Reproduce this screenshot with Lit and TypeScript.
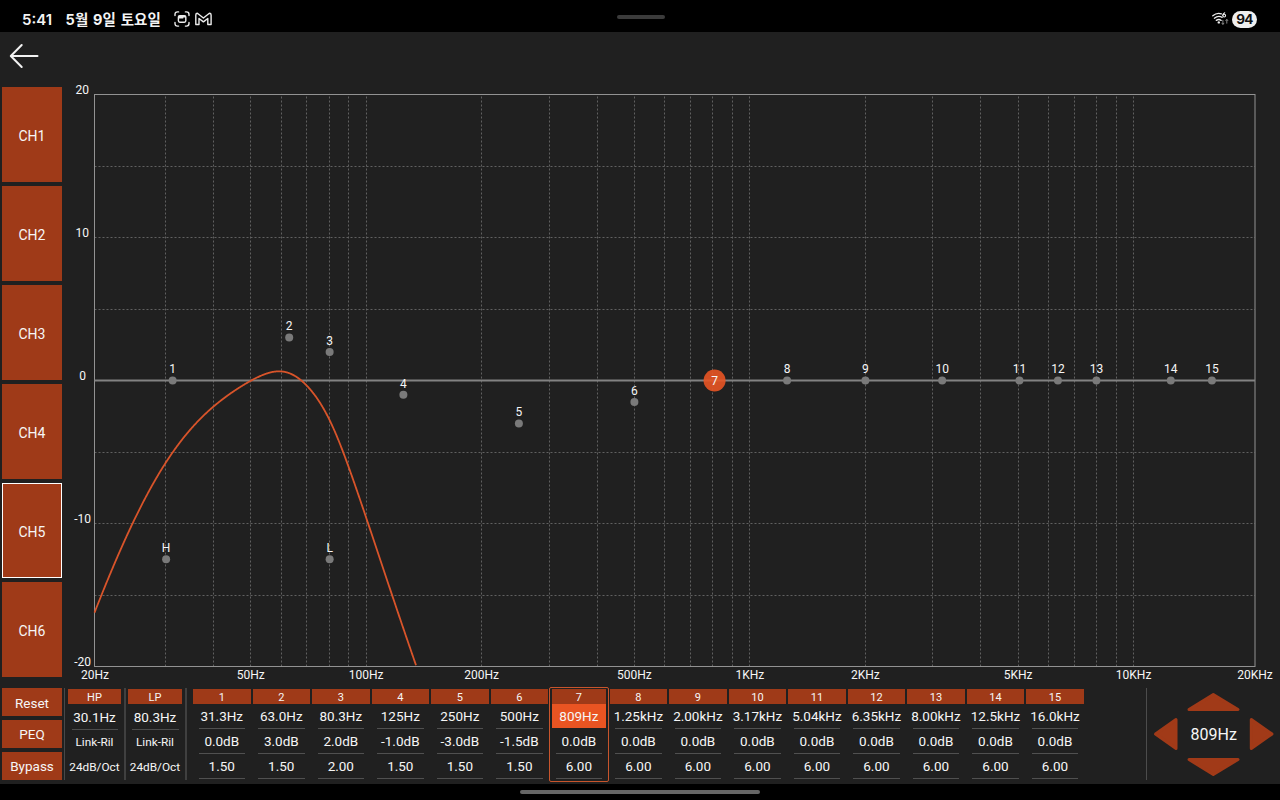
import { LitElement, html, svg, css } from "lit";
import { customElement, state } from "lit/decorators.js";
import { classMap } from "lit/directives/class-map.js";

interface Band {
  name: string;
  freq: number;
  label: string;
  gain: number;
  q: number;
}

const band = (name: string, freq: number, label: string, gain: number, q: number): Band => ({ name, freq, label, gain, q });

const BANDS: Band[] = [
  band("1", 31.3, "31.3Hz", 0, 1.5),
  band("2", 63, "63.0Hz", 3, 1.5),
  band("3", 80.3, "80.3Hz", 2, 2),
  band("4", 125, "125Hz", -1, 1.5),
  band("5", 250, "250Hz", -3, 1.5),
  band("6", 500, "500Hz", -1.5, 1.5),
  band("7", 809, "809Hz", 0, 6),
  band("8", 1250, "1.25kHz", 0, 6),
  band("9", 2000, "2.00kHz", 0, 6),
  band("10", 3170, "3.17kHz", 0, 6),
  band("11", 5040, "5.04kHz", 0, 6),
  band("12", 6350, "6.35kHz", 0, 6),
  band("13", 8000, "8.00kHz", 0, 6),
  band("14", 12500, "12.5kHz", 0, 6),
  band("15", 16000, "16.0kHz", 0, 6),
];

const HIGH_PASS = 30.1;
const LOW_PASS = 80.3;

// Chart geometry, in the pixel units of the chart's own viewBox.
const LEFT = 30.5;
const RIGHT = 1191;
const TOP = 12.5;
const BOTTOM = 584.5;
const ZERO = 298.5;
const PX_PER_DB = 14.3;
const DECADE = 383.7;

const xOf = (freq: number) => 302.2 + DECADE * Math.log10(freq / 100);
const freqAt = (x: number) => 100 * Math.pow(10, (x - 302.2) / DECADE);
const yOf = (db: number) => ZERO - db * PX_PER_DB;

function bellDb(freq: number, b: Band): number {
  const w = freq / b.freq;
  const a = Math.pow(10, b.gain / 40);
  const re = 1 - w * w;
  return 10 * Math.log10((re * re + ((w * a) / b.q) ** 2) / (re * re + (w / (a * b.q)) ** 2));
}

function responseDb(freq: number): number {
  const hp = (freq / HIGH_PASS) ** 4;
  const lp = (freq / LOW_PASS) ** 4;
  const slopes = 20 * Math.log10(hp / (1 + hp)) - 20 * Math.log10(1 + lp);
  return BANDS.reduce((sum, b) => (b.gain ? sum + bellDb(freq, b) : sum), slopes);
}

@customElement("eq-status-bar")
export class EqStatusBar extends LitElement {
  static styles = css`
    :host {
      display: flex;
      height: 32px;
      background: #000;
      color: #f4f4f4;
      align-items: center;
      box-sizing: border-box;
      padding: 6px 23px 0 22px;
      font: 600 15px/20px Inter, "Noto Sans CJK KR", sans-serif;
    }
    .time { width: 33px; flex: none; padding-top: 1px; white-space: nowrap; }
    .date { margin-left: 10.5px; width: 97px; flex: none; padding-top: 1px; font: 700 14.5px/20px Inter, "Noto Sans CJK KR", sans-serif; letter-spacing: 0.15px; word-spacing: 1px; white-space: nowrap; }
    .notes { margin-left: 11.5px; flex: none; }
    .handle { margin: -4px 0 0 404.5px; width: 48px; height: 4px; border-radius: 2px; background: #3b3b3b; flex: none; }
    .wifi { margin-left: auto; }
    .battery {
      margin-left: 3.5px;
      width: 25px;
      height: 17px;
      border-radius: 9px;
      background: #efefef;
      color: #111;
      text-align: center;
      font: 700 13.5px/17px Inter, sans-serif;
      letter-spacing: -0.8px;
    }
  `;
  render() {
    return html`
      <span class="time">5:41</span>
      <span class="date">5월 9일 토요일</span>
      <svg class="notes" width="38" height="16" viewBox="0 0 38 16" fill="none" stroke="#ececec" stroke-width="1.4" stroke-linecap="round" stroke-linejoin="round">
        <path d="M1 4.6V3.4Q1 .9 3.5.9H4.6M11.4.9H12.5Q15 .9 15 3.4V4.6M15 11.4V12.6Q15 15.1 12.5 15.1H11.4M4.6 15.1H3.5Q1 15.1 1 12.6V11.4" />
        <rect x="4.4" y="4.6" width="7.4" height="6.6" rx="1.4" />
        <path d="M5 5.6H11.2M5 6.7H8.5" stroke-width="1.8" />
        <path d="M21.8 13.5V4Q21.8 2.3 23.4 2.3L29.4 7 35.4 2.3Q37.1 2.3 37.1 4V13.5H33.8V7.5L29.4 10.9 25 7.5V13.5Z" stroke-width="1.4" />
      </svg>
      <div class="handle"></div>
      <svg class="wifi" width="17" height="14" viewBox="0 0 17 14" fill="none" stroke-linecap="round">
        <path d="M.8 3.8Q4.8.4 9.4 1.9M2.4 6.2Q6 3.2 10.2 5.3M4.3 8.4Q6.8 6.6 9.2 8.4" stroke="#eee" stroke-width="1.3" />
        <circle cx="6.8" cy="10.4" r="1.2" fill="#eee" />
        <circle cx="12.2" cy="3.6" r="1.4" stroke="#eee" stroke-width="1.1" />
        <path d="M12.7.8Q11 1.7 10.8 3.4" stroke="#eee" stroke-width="1.1" />
        <path d="M10.9 8.4V12.2M9.9 11.2L10.9 12.4 11.9 11.2M14.8 11.2V7.6M13.8 8.6L14.8 7.4 15.8 8.6" stroke="#858585" stroke-width="1" />
      </svg>
      <div class="battery">94</div>
    `;
  }
}

@customElement("eq-chart")
export class EqChart extends LitElement {
  static styles = css`
    :host { display: block; width: 1216px; height: 602px; }
    .plot { display: block; font: 12px Roboto, sans-serif; }
    .grid { stroke: #606060; stroke-width: 1; stroke-dasharray: 2 2; }
    .frame { fill: none; stroke: #929292; stroke-width: 1; }
    .zero { stroke: #828282; stroke-width: 2; }
    .curve { fill: none; stroke: #d8542a; stroke-width: 1.8; }
    .label { fill: #f6f6f6; text-anchor: middle; }
    .side { text-anchor: end; }
    .dot { fill: #7a7a7a; }
    .hot { fill: #e85423; fill-opacity: 0.9; }
  `;

  private curve(): string {
    const pts: string[] = [];
    for (let x = LEFT; x < RIGHT; x += 0.5) {
      const y = yOf(responseDb(freqAt(x)));
      if (x > 300 && y > BOTTOM) break;
      pts.push(`${x.toFixed(1)},${y.toFixed(2)}`);
    }
    return pts.join(" ");
  }

  private dot(name: string, freq: number, db: number) {
    const x = xOf(freq);
    const y = yOf(db);
    return svg`<circle class="dot" cx=${x} cy=${y} r="4" />
      <text class="label" x=${x} y=${y - 7.3}>${name}</text>`;
  }

  render() {
    const cols: number[] = [];
    for (const decade of [10, 100, 1000, 10000])
      for (let n = 1; n < 10; n++) {
        const f = n * decade;
        if (f > 20 && f < 15000) cols.push(f);
      }
    const ticks: [string, number][] = [
      ["50Hz", 50], ["100Hz", 100], ["200Hz", 200], ["500Hz", 500], ["1KHz", 1000],
      ["2KHz", 2000], ["5KHz", 5000], ["10KHz", 10000],
    ];
    return html`<svg class="plot" width="1216" height="602" viewBox="0 0 1216 602">
      ${cols.map((f) => {
        const x = Math.floor(xOf(f)) + 0.5;
        return svg`<line class="grid" x1=${x} x2=${x} y1=${TOP + 2} y2=${BOTTOM} />`;
      })}
      ${[15, 10, 5, -5, -10, -15].map((db) => {
        const y = Math.floor(yOf(db)) + 0.5;
        return svg`<line class="grid" x1=${LEFT} x2=${RIGHT} y1=${y} y2=${y} />`;
      })}
      <rect class="frame" x=${LEFT} y=${TOP} width=${RIGHT - LEFT} height=${BOTTOM - TOP} />
      <line class="zero" x1=${LEFT} x2=${RIGHT} y1=${ZERO} y2=${ZERO} />
      <polyline class="curve" points=${this.curve()} />
      ${BANDS.map((b) =>
        b.name === "7"
          ? svg`<circle class="hot" cx=${xOf(b.freq)} cy=${ZERO} r="11" />
              <text class="label" x=${xOf(b.freq)} y=${ZERO + 4.5}>7</text>`
          : this.dot(b.name, b.freq, b.gain)
      )}
      ${this.dot("H", HIGH_PASS, -12.5)} ${this.dot("L", LOW_PASS, -12.5)}
      ${[20, 10, 0, -10, -20].map(
        (db) => svg`<text class="label side" x=${db < 0 ? 27 : db ? 25 : 22} y=${yOf(db) - 0.1}>${db}</text>`
      )}
      <text class="label" x="31" y="597">20Hz</text>
      ${ticks.map(([t, f]) => svg`<text class="label" x=${xOf(f)} y="597">${t}</text>`)}
      <text class="label" x="1191" y="597">20KHz</text>
    </svg>`;
  }
}

@customElement("eq-dpad")
export class EqDpad extends LitElement {
  static styles = css`
    :host { display: block; width: 133px; height: 92px; border-left: 1px solid #4c4c4c; }
    .pad { display: block; }
    .arrow { fill: #a13a18; stroke: #a13a18; stroke-width: 3; stroke-linejoin: round; }
    .value { fill: #f6f6f6; font: 16px Roboto, sans-serif; text-anchor: middle; }
  `;
  render() {
    return html`<svg class="pad" width="133" height="92" viewBox="1147 688 133 92">
      <path class="arrow" d="M1189 709.5L1213.3 694.5 1238 709.5Z" />
      <path class="arrow" d="M1189 759.5L1213.3 774.5 1238 759.5Z" />
      <path class="arrow" d="M1176 719.5V748.5L1155.5 734Z" />
      <path class="arrow" d="M1251.3 719.5V748.5L1272 734Z" />
      <text class="value" x="1213.7" y="740">809Hz</text>
    </svg>`;
  }
}

@customElement("app-root")
export class AppRoot extends LitElement {
  @state() private channel = 5;
  @state() private selected = "7";

  static styles = css`
    :host {
      display: flex;
      flex-direction: column;
      width: 1280px;
      height: 800px;
      overflow: hidden;
      background: #202020;
      color: #f6f6f6;
      font-family: Roboto, sans-serif;
    }
    .header { height: 50px; flex: none; display: flex; padding-left: 9px; box-sizing: border-box; }
    .back { margin-top: 10px; }
    .main { display: flex; height: 602px; flex: none; }
    .channels { width: 60px; margin: 5.3px 0 0 2px; display: flex; flex-direction: column; gap: 4px; flex: none; }
    .button {
      background: #9f3a18;
      display: flex;
      align-items: center;
      justify-content: center;
      box-sizing: border-box;
      border: 1px solid transparent;
      font-size: 14px;
    }
    .channel { height: 95px; border-color: #9f3a18; padding-top: 1.6px; }
    .active { border-color: #fff; }
    .chart { margin-left: 2px; flex: none; }
    .bottom { height: 100px; flex: none; display: flex; box-sizing: border-box; padding-left: 2px; }
    .actions { width: 60px; height: 92px; margin-top: 4px; display: flex; flex-direction: column; gap: 3.5px; flex: none; }
    .action { flex: 1; border-color: #9f3a18; font-size: 13.5px; padding-top: 1px; }
    .filters { display: flex; margin: 4px 0 0 2px; height: 92px; border-left: 1px solid #484848; flex: none; }
    .filter { width: 61px; box-sizing: border-box; border-right: 2px solid #404040; padding: 1px 3px 0 3px; text-align: center; }
    .filter.last { padding-left: 2px; padding-right: 3px; }
    .title { background: #9f3a18; height: 15px; font-size: 11px; line-height: 17px; text-align: center; }
    .freq { font-size: 13.5px; height: 25px; line-height: 26px; border-bottom: 1px solid #4c4c4c; margin: 0 3.5px; display: flex; justify-content: center; }
    .kind { font-size: 11.8px; height: 25px; line-height: 25px; display: flex; justify-content: center; white-space: nowrap; }
    .bands { display: grid; grid-template-columns: repeat(15, 59.53px); margin: 2.5px 0 0 5px; height: 95px; flex: none; }
    .band { box-sizing: border-box; border: 1px solid transparent; border-radius: 2px; height: 95px; padding-top: 1.5px; text-align: center; }
    .cell {
      height: 25px;
      box-sizing: border-box;
      border-bottom: 1px solid #505050;
      margin: 0 5.5px;
      font-size: 13.5px;
      line-height: 25px;
      display: flex;
      justify-content: center;
      white-space: nowrap;
    }
    .selected { border-color: #c8552c; }
    .selected .title { margin: 0 1.5px; }
    .selected .first { background: #e95422; margin: 0 2px; border-color: #202020; background-clip: padding-box; }
    .pad { margin: 4px 0 0 auto; flex: none; }
    .nav { height: 16px; flex: none; background: #000; display: flex; align-items: center; justify-content: center; }
    .pill { width: 240px; height: 4px; border-radius: 2px; background: #666; }
  `;

  private filter(title: string, freq: string, last: boolean) {
    return html`<div class=${classMap({ filter: true, last })}>
      <div class="title">${title}</div>
      <div class="freq">${freq}</div>
      <div class="kind">Link-Ril</div>
      <div class="kind">24dB/Oct</div>
    </div>`;
  }

  render() {
    return html`
      <eq-status-bar></eq-status-bar>
      <div class="header">
        <svg class="back" width="32" height="28" viewBox="0 0 32 28" fill="none" stroke="#f2f2f2" stroke-width="2" stroke-linecap="round" stroke-linejoin="round">
          <path d="M28.5 14H2M12.7 3L1.8 14 12.7 25" />
        </svg>
      </div>
      <div class="main">
        <div class="channels">
          ${[1, 2, 3, 4, 5, 6].map(
            (n) => html`<div class=${classMap({ button: true, channel: true, active: n === this.channel })} @click=${() => (this.channel = n)}>CH${n}</div>`
          )}
        </div>
        <eq-chart class="chart"></eq-chart>
      </div>
      <div class="bottom">
        <div class="actions">
          ${["Reset", "PEQ", "Bypass"].map((t) => html`<div class="button action">${t}</div>`)}
        </div>
        <div class="filters">${this.filter("HP", "30.1Hz", false)} ${this.filter("LP", "80.3Hz", true)}</div>
        <div class="bands">
          ${BANDS.map(
            (b) => html`<div class=${classMap({ band: true, selected: b.name === this.selected })} @click=${() => (this.selected = b.name)}>
              <div class="title">${b.name}</div>
              <div class="cell first">${b.label}</div>
              <div class="cell">${b.gain.toFixed(1)}dB</div>
              <div class="cell">${b.q.toFixed(2)}</div>
            </div>`
          )}
        </div>
        <eq-dpad class="pad"></eq-dpad>
      </div>
      <div class="nav"><div class="pill"></div></div>
    `;
  }
}
